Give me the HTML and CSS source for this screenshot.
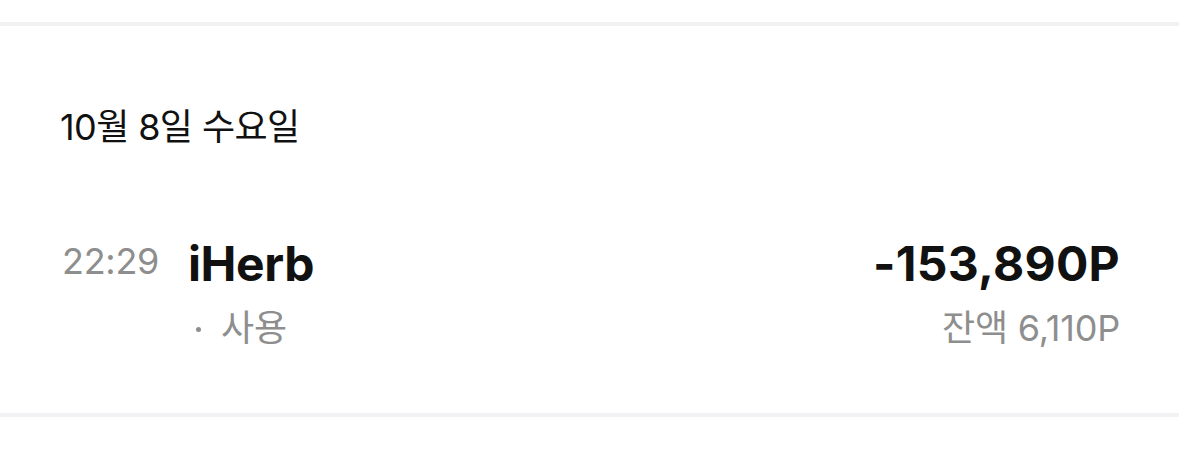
FILE: index.html
```html
<!DOCTYPE html>
<html lang="ko">
<head>
  <meta charset="UTF-8" />
  <meta name="viewport" content="width=device-width, initial-scale=1.0"/>
  <title>포인트 내역</title>
  <link rel="stylesheet" href="styles.css">
</head>
<body>

  <div class="top-space"></div>
  <div class="divider"></div>

  <section class="day">
    <h3 class="day-title">10월 8일 수요일</h3>

    <div class="entry">
      <div class="time">22:29</div>
      <div class="info">
        <div class="merchant">iHerb</div>
        <div class="kind"><span class="dot"></span>사용</div>
      </div>
      <div class="amounts">
        <div class="amount">-153,890P</div>
        <div class="balance">잔액 6,110P</div>
      </div>
    </div>
  </section>

  <div class="divider"></div>

</body>
</html>
```

FILE: styles.css
```css
body {
  margin: 0;
  background: #ffffff;
  font-family: Inter, "Noto Sans CJK KR", sans-serif;
  color: #111111;
}

.top-space {
  height: 22px;
}

.divider {
  height: 4px;
  background: #f2f2f4;
}

.day {
  padding: 79px 59px 0 60px;
  box-sizing: border-box;
  height: 387px;
}

.day-title {
  margin: 0;
  font-size: 36px;
  font-weight: 400;
  line-height: 44px;
  letter-spacing: -0.6px;
}

.entry {
  display: flex;
  align-items: flex-start;
  margin-top: 87px;
}

.time {
  width: 126px;
  padding-left: 2px;
  margin-top: 3px;
  font-size: 36px;
  line-height: 44px;
  color: #8e8e8e;
  letter-spacing: -0.3px;
}

.info {
  flex: 1;
}

.merchant {
  font-size: 48px;
  font-weight: 700;
  line-height: 56px;
  letter-spacing: -0.4px;
}

.kind {
  display: flex;
  align-items: center;
  margin-top: 14px;
  font-size: 36px;
  line-height: 44px;
  color: #8e8e8e;
}

.dot {
  width: 5px;
  height: 5px;
  margin: 2px 20px 0 8px;
  border-radius: 50%;
  background: #8e8e8e;
}

.amounts {
  text-align: right;
}

.amount {
  font-size: 48px;
  font-weight: 700;
  line-height: 56px;
  letter-spacing: 0.3px;
}

.balance {
  margin-top: 14px;
  font-size: 36px;
  line-height: 44px;
  color: #8e8e8e;
  letter-spacing: -0.2px;
}
```
